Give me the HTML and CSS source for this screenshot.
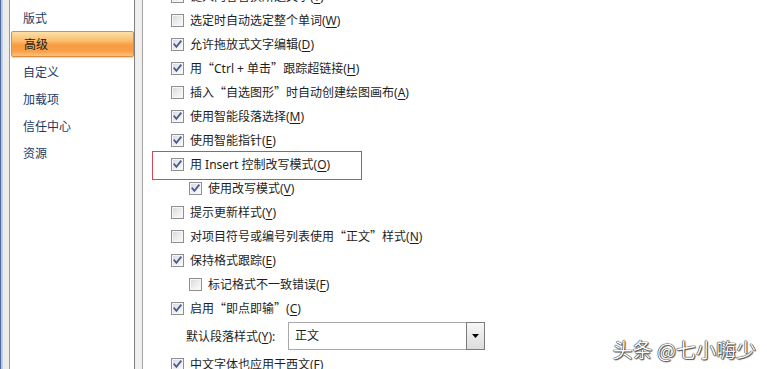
FILE: index.html
```html
<!DOCTYPE html>
<html lang="zh-CN">
<head>
<meta charset="utf-8">
<link rel="stylesheet" href="styles.css">
</head>
<body>
<div class="window">
  <div class="edge"></div>
  <nav class="sidebar">
    <div class="nav-item">版式</div>
    <div class="nav-item active">高级</div>
    <div class="nav-item">自定义</div>
    <div class="nav-item">加载项</div>
    <div class="nav-item">信任中心</div>
    <div class="nav-item">资源</div>
  </nav>
  <div class="gap"></div>
  <main class="content">
    <div class="options">
      <div class="row partial"><span class="cb checked"></span><span class="label">键入内容替换所选文字(<u>T</u>)</span></div>
      <div class="row"><span class="cb"></span><span class="label">选定时自动选定整个单词(<u>W</u>)</span></div>
      <div class="row"><span class="cb checked"></span><span class="label">允许拖放式文字编辑(<u>D</u>)</span></div>
      <div class="row"><span class="cb checked"></span><span class="label">用<span class="q">“</span>Ctrl + 单击<span class="q">”</span>跟踪超链接(<u>H</u>)</span></div>
      <div class="row"><span class="cb"></span><span class="label">插入<span class="q">“</span>自选图形<span class="q">”</span>时自动创建绘图画布(<u>A</u>)</span></div>
      <div class="row"><span class="cb checked"></span><span class="label">使用智能段落选择(<u>M</u>)</span></div>
      <div class="row"><span class="cb checked"></span><span class="label">使用智能指针(<u>E</u>)</span></div>
      <div class="row highlight"><span class="cb checked"></span><span class="label">用 Insert 控制改写模式(<u>O</u>)</span><span class="redbox"></span></div>
      <div class="row sub"><span class="cb checked"></span><span class="label">使用改写模式(<u>V</u>)</span></div>
      <div class="row"><span class="cb"></span><span class="label">提示更新样式(<u>Y</u>)</span></div>
      <div class="row"><span class="cb"></span><span class="label">对项目符号或编号列表使用<span class="q">“</span>正文<span class="q">”</span>样式(<u>N</u>)</span></div>
      <div class="row"><span class="cb checked"></span><span class="label">保持格式跟踪(<u>E</u>)</span></div>
      <div class="row sub"><span class="cb"></span><span class="label">标记格式不一致错误(<u>F</u>)</span></div>
      <div class="row"><span class="cb checked"></span><span class="label">启用<span class="q">“</span>即点即输<span class="q">”</span>(<u>C</u>)</span></div>
      <div class="row select-row">
        <span class="select-label">默认段落样式(<u>Y</u>):</span>
        <div class="select"><span class="select-value">正文</span><span class="select-btn"><svg width="7" height="4" viewBox="0 0 7 4"><path d="M0 0h7L3.5 4z" fill="#000"/></svg></span></div>
      </div>
      <div class="row"><span class="cb checked"></span><span class="label">中文字体也应用于西文(<u>F</u>)</span></div>
    </div>
    <div class="watermark">头条 @七小嗨少</div>
  </main>
</div>
</body>
</html>
```
FILE: styles.css
```css
* { box-sizing: border-box; }
html, body { margin: 0; padding: 0; }
body {
  width: 767px;
  height: 369px;
  overflow: hidden;
  font-family: "Noto Sans", "Noto Sans CJK SC", sans-serif;
  font-size: 12px;
}
.window {
  display: flex;
  height: 369px;
  background: #ececec;
}
.edge {
  width: 3px;
  background: linear-gradient(to right, #4c6d9e 0, #4c6d9e 1px, #a9c0dc 1px, #c9d6e6 3px);
  margin-right: 6px;
}
.sidebar {
  width: 126px;
  background: #fff;
  border-left: 1px solid #9a9a9a;
  border-right: 1px solid #7e7e7e;
  padding: 4px 0 0 1px;
}
.nav-item {
  height: 27px;
  line-height: 27px;
  padding-left: 12px;
  color: #1e3a66;
  font-family: "Noto Sans CJK SC", sans-serif;
  font-size: 12px;
}
.nav-item.active {
  height: 26px;
  line-height: 24px;
  margin-bottom: 1px;
  color: #1a1a1a;
  border: 1px solid #d98f40;
  border-radius: 2px;
  background: linear-gradient(#fde0a8 0%, #fbbf70 35%, #f89b40 55%, #f8a04a 80%, #fbc27c 100%);
  box-shadow: 0 1px 1px rgba(180, 130, 60, 0.35);
}
.gap {
  width: 7px;
  background: #efefef;
}
.content {
  flex: 1;
  position: relative;
  background: #fff;
  border-left: 1px solid #a3a3a3;
  overflow: hidden;
}
.options {
  margin-top: -16px;
  padding-left: 28px;
}
.row {
  position: relative;
  display: flex;
  align-items: center;
  height: 24px;
  color: #1e1e1e;
}
.row.sub { padding-left: 18px; }
.cb {
  width: 13px;
  height: 13px;
  flex: none;
  border: 1px solid #8f8f8f;
  background: linear-gradient(135deg, #d6d6d6 0%, #ececec 50%, #fbfbfb 100%);
  box-shadow: inset 0 0 0 1px #f7f7f7;
  margin-right: 6px;
}
.cb.checked {
  background:
    url("data:image/svg+xml;utf8,<svg xmlns='http://www.w3.org/2000/svg' width='11' height='11' viewBox='0 0 11 11'><path d='M2.3 5.3 L4.4 7.8 L8.8 2.3' fill='none' stroke='%234a5c96' stroke-width='1.8' stroke-linecap='square'/></svg>") center/11px 11px no-repeat,
    linear-gradient(135deg, #d6d6d6 0%, #ececec 50%, #fbfbfb 100%);
}
.label {
  font-family: "Noto Sans", "Noto Sans CJK SC", sans-serif;
  white-space: nowrap;
}
.q {
  font-family: "Noto Sans CJK SC", sans-serif;
  font-feature-settings: "fwid" 1;
}
u { text-underline-offset: 2px; }
.redbox {
  position: absolute;
  left: -19px;
  top: -1px;
  width: 210px;
  height: 29px;
  border: 1px solid #d9465a;
}
.select-row {
  height: 32px;
  padding-left: 15px;
}
.select-label {
  width: 102px;
  white-space: nowrap;
}
.select {
  display: flex;
  width: 197px;
  height: 28px;
  border: 1px solid #a8a8a8;
  background: #fff;
}
.select-value {
  flex: 1;
  line-height: 26px;
  padding-left: 6px;
}
.select-btn {
  width: 19px;
  margin: -1px -1px -1px 0;
  border: 1px solid #7c7c7c;
  background: linear-gradient(#f7f7f7, #dcdcdc);
  display: flex;
  align-items: center;
  justify-content: center;
}
.watermark {
  position: absolute;
  right: 11px;
  bottom: 9px;
  font-family: "Noto Sans CJK SC", sans-serif;
  font-size: 20px;
  line-height: 1;
  color: #fafafa;
  text-shadow: 0 0 1px #000, 0 0 1px #000, 1px 1px 1px rgba(0,0,0,0.6);
  white-space: nowrap;
}
```
